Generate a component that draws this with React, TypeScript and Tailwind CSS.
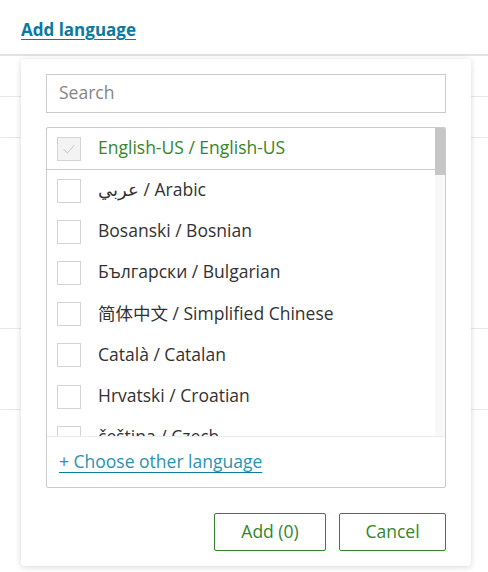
import React from "react";

const LANGUAGES = [
  "عربي / Arabic",
  "Bosanski / Bosnian",
  "Български / Bulgarian",
  "简体中文 / Simplified Chinese",
  "Català / Catalan",
  "Hrvatski / Croatian",
  "čeština / Czech",
];

// heights of the table rows sitting behind the popover
const BACKGROUND_ROWS = [41, 41, 191, 81];

function Checkbox({ checked = false, disabled = false }: { checked?: boolean; disabled?: boolean }) {
  return (
    <span
      className={`flex h-6 w-6 shrink-0 items-center justify-center border border-[#d4d4d4] ${disabled ? "bg-[#f3f3f3]" : "bg-white"}`}
    >
      {checked && (
        <svg viewBox="0 0 24 24" className="h-4 w-4" fill="none" stroke="#cfcfcf" strokeWidth="1.6">
          <polyline points="4,12.5 9.5,18 20,6" />
        </svg>
      )}
    </span>
  );
}

export default function App() {
  return (
    <div className="relative h-[572px] w-[488px] overflow-hidden bg-white font-['Open_Sans','Noto_Sans_CJK_SC',sans-serif] text-[17.5px] text-[#323232]">
      <div className="flex h-[54px] items-end px-[21px] pb-[16px]">
        <a href="#" className="text-[17px] font-bold leading-none text-[#0a7aa0] underline underline-offset-[3px]">
          Add language
        </a>
      </div>
      <div className="h-[2px] bg-[#e3e3e3]" />
      {BACKGROUND_ROWS.map((height, index) => (
        <div key={index} className="border-b border-[#e8e8e8]" style={{ height }} />
      ))}

      <div className="absolute left-[21px] top-[59px] flex h-[507px] w-[450px] flex-col rounded-[4px] bg-white px-[25px] pt-[15px] shadow-[0_1px_6px_rgba(0,0,0,0.16)]">
        <div className="flex h-[39px] items-center border border-[#cbcbcb] px-3 pb-[2px] text-[#858585]">Search</div>

        <div className="mt-[14px] flex h-[361px] flex-col overflow-hidden rounded-[2px] border border-[#cbcbcb]">
          <div className="flex h-[308px] overflow-hidden">
            <ul className="flex-1">
              <li className="flex h-[42px] items-center gap-[17px] border-b border-[#cbcbcb] pl-[10px]">
                <Checkbox checked disabled />
                <span className="pb-[3px] text-[#35852b]">English-US / English-US</span>
              </li>
              {LANGUAGES.map((label) => (
                <li key={label} className="flex h-[41.2px] items-center gap-[17px] pl-[10px]">
                  <Checkbox />
                  <span className="pb-[3px]">{label}</span>
                </li>
              ))}
            </ul>
            <div className="w-[10px] shrink-0 bg-[#f8f8f8]">
              <div className="h-[47px] bg-[#c6c6c6]" />
            </div>
          </div>
          <div className="flex flex-1 items-center border-t border-[#e6ecef] pb-[2px] pl-[12px]">
            <a href="#" className="text-[#2a93b0] underline decoration-[#0b7d9c] underline-offset-[4px]">
              + Choose other language
            </a>
          </div>
        </div>

        <div className="mt-[25px] flex justify-end gap-[13px]">
          <button className="h-[38px] w-[112px] rounded-[2px] border border-[#35852b] pb-[2px] text-[#35852b]">
            Add (0)
          </button>
          <button className="h-[38px] w-[107px] rounded-[2px] border border-[#35852b] pb-[2px] text-[#35852b]">
            Cancel
          </button>
        </div>
      </div>
    </div>
  );
}
